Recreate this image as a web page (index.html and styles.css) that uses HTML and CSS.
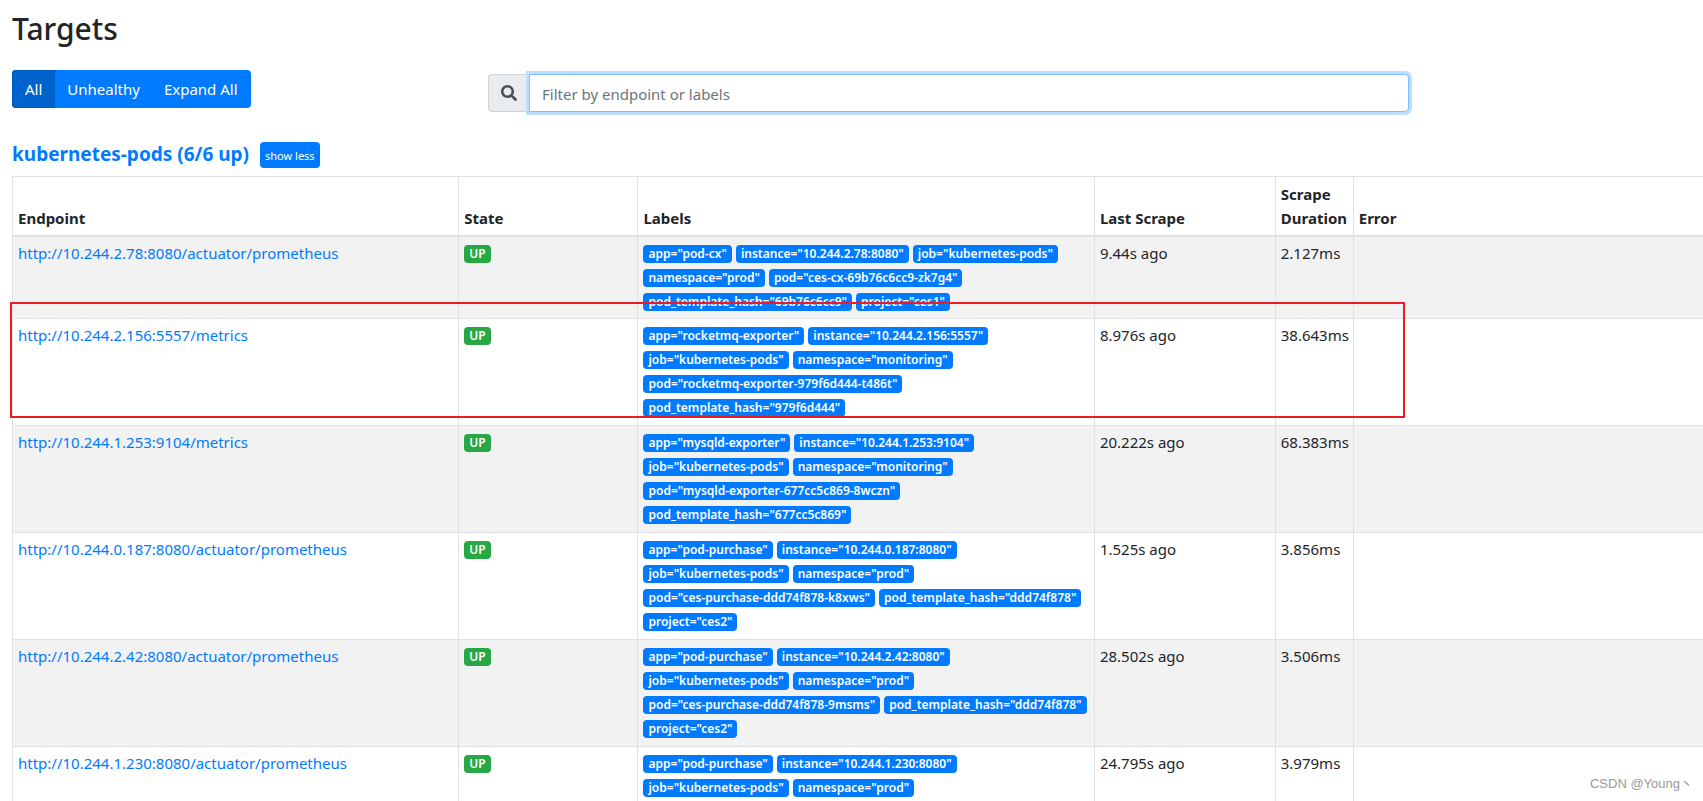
FILE: index.html
```html
<!DOCTYPE html>
<html lang="en">
<head>
<meta charset="utf-8">
<title>Targets</title>
<link rel="stylesheet" href="styles.css">
</head>
<body>
<main class="page">
  <h2 class="title">Targets</h2>
  <div class="toolbar">
    <div class="btn-group">
      <button type="button" class="btn active">All</button>
      <button type="button" class="btn">Unhealthy</button>
      <button type="button" class="btn">Expand All</button>
    </div>
    <div class="search">
      <label class="search-icon" for="filter" aria-label="Filter">
        <svg viewBox="0 0 512 512" width="16" height="16" aria-hidden="true"><path fill="currentColor" d="M505 442.700L405.300 343c-4.500-4.500-10.600-7-17-7H372c27.600-35.300 44-79.700 44-128C416 93.100 322.900 0 208 0S0 93.100 0 208s93.100 208 208 208c48.300 0 92.700-16.400 128-44v16.300c0 6.400 2.500 12.500 7 17l99.700 99.700c9.400 9.400 24.600 9.400 33.900 0l28.300-28.300c9.400-9.400 9.400-24.600.1-34zM208 336c-70.700 0-128-57.200-128-128 0-70.700 57.200-128 128-128 70.700 0 128 57.200 128 128 0 70.700-57.200 128-128 128z"/></svg>
      </label>
      <input class="search-input" id="filter" type="text" placeholder="Filter by endpoint or labels">
    </div>
  </div>
  <div class="pool">
    <h3 class="pool-title"><a href="#pool-kubernetes-pods">kubernetes-pods (6/6 up)</a></h3>
    <button type="button" class="btn-small">show less</button>
  </div>
  <table class="targets" id="pool-kubernetes-pods">
    <colgroup><col class="c-endpoint"><col class="c-state"><col class="c-labels"><col class="c-last"><col class="c-duration"><col></colgroup>
    <thead>
      <tr><th>Endpoint</th><th>State</th><th>Labels</th><th>Last Scrape</th><th>Scrape Duration</th><th>Error</th></tr>
    </thead>
    <tbody>
      <tr>
        <td><a href="#">http://10.244.2.78:8080/actuator/prometheus</a></td>
        <td><div class="badges"><span class="badge up">UP</span></div></td>
        <td><div class="badges"><span class="badge">app="pod-cx"</span><span class="badge">instance="10.244.2.78:8080"</span><span class="badge">job="kubernetes-pods"</span><span class="badge">namespace="prod"</span><span class="badge">pod="ces-cx-69b76c6cc9-zk7g4"</span><span class="badge">pod_template_hash="69b76c6cc9"</span><span class="badge">project="ces1"</span></div></td>
        <td>9.44s ago</td><td>2.127ms</td><td></td>
      </tr>
      <tr>
        <td><a href="#">http://10.244.2.156:5557/metrics</a></td>
        <td><div class="badges"><span class="badge up">UP</span></div></td>
        <td><div class="badges"><span class="badge">app="rocketmq-exporter"</span><span class="badge">instance="10.244.2.156:5557"</span><span class="badge">job="kubernetes-pods"</span><span class="badge">namespace="monitoring"</span><span class="badge">pod="rocketmq-exporter-979f6d444-t486t"</span><span class="badge">pod_template_hash="979f6d444"</span></div></td>
        <td>8.976s ago</td><td>38.643ms</td><td></td>
      </tr>
      <tr>
        <td><a href="#">http://10.244.1.253:9104/metrics</a></td>
        <td><div class="badges"><span class="badge up">UP</span></div></td>
        <td><div class="badges"><span class="badge">app="mysqld-exporter"</span><span class="badge">instance="10.244.1.253:9104"</span><span class="badge">job="kubernetes-pods"</span><span class="badge">namespace="monitoring"</span><span class="badge">pod="mysqld-exporter-677cc5c869-8wczn"</span><span class="badge">pod_template_hash="677cc5c869"</span></div></td>
        <td>20.222s ago</td><td>68.383ms</td><td></td>
      </tr>
      <tr>
        <td><a href="#">http://10.244.0.187:8080/actuator/prometheus</a></td>
        <td><div class="badges"><span class="badge up">UP</span></div></td>
        <td><div class="badges"><span class="badge">app="pod-purchase"</span><span class="badge">instance="10.244.0.187:8080"</span><span class="badge">job="kubernetes-pods"</span><span class="badge">namespace="prod"</span><span class="badge">pod="ces-purchase-ddd74f878-k8xws"</span><span class="badge">pod_template_hash="ddd74f878"</span><span class="badge">project="ces2"</span></div></td>
        <td>1.525s ago</td><td>3.856ms</td><td></td>
      </tr>
      <tr>
        <td><a href="#">http://10.244.2.42:8080/actuator/prometheus</a></td>
        <td><div class="badges"><span class="badge up">UP</span></div></td>
        <td><div class="badges"><span class="badge">app="pod-purchase"</span><span class="badge">instance="10.244.2.42:8080"</span><span class="badge">job="kubernetes-pods"</span><span class="badge">namespace="prod"</span><span class="badge">pod="ces-purchase-ddd74f878-9msms"</span><span class="badge">pod_template_hash="ddd74f878"</span><span class="badge">project="ces2"</span></div></td>
        <td>28.502s ago</td><td>3.506ms</td><td></td>
      </tr>
      <tr>
        <td><a href="#">http://10.244.1.230:8080/actuator/prometheus</a></td>
        <td><div class="badges"><span class="badge up">UP</span></div></td>
        <td><div class="badges"><span class="badge">app="pod-purchase"</span><span class="badge">instance="10.244.1.230:8080"</span><span class="badge">job="kubernetes-pods"</span><span class="badge">namespace="prod"</span></div></td>
        <td>24.795s ago</td><td>3.979ms</td><td></td>
      </tr>
    </tbody>
  </table>
  <div class="highlight"></div>
  <div class="watermark">CSDN @Young丶</div>
</main>
</body>
</html>
```
FILE: styles.css
```css
* { box-sizing: border-box; }

body {
  margin: 0;
  height: 100vh;
  overflow: hidden;
  background: #fff;
  color: #212529;
  font-family: "Noto Sans", "Open Sans", sans-serif;
  font-size: 15px;
  line-height: 24px;
}

a { color: #007bff; text-decoration: none; }
button, input { font: inherit; }

.page { position: relative; height: 100%; padding: 10px 0 0 12px; }

.title {
  margin: 0 0 22px;
  font-size: 30px;
  font-weight: 500;
  line-height: 38px;
}

.toolbar {
  display: grid;
  grid-template-columns: 476fr 921fr 294fr;
  align-items: start;
}

.btn-group { display: flex; }

.btn {
  height: 38px;
  padding: 0 12px;
  border: 0;
  background: #007bff;
  color: #fff;
}
.btn.active { background: #0062cc; box-shadow: inset 0 0 0 1px #005cbf; }
.btn:first-child { padding: 0 13px; border-radius: 4px 0 0 4px; }
.btn:last-child { padding-right: 13px; border-radius: 0 4px 4px 0; }

.search { display: flex; height: 38px; margin-top: 4px; }

.search-icon {
  display: flex;
  align-items: center;
  padding: 0 12px;
  border: 1px solid #ced4da;
  border-right: 0;
  border-radius: 4px 0 0 4px;
  background: #e9ecef;
  color: #495057;
}

.search-input {
  flex: 1;
  min-width: 0;
  padding: 2px 12px 0;
  border: 1px solid #80bdff;
  border-radius: 0 4px 4px 0;
  outline: 0;
  box-shadow: 0 0 0 3px #bfdeff;
  color: #495057;
}
.search-input::placeholder { color: #6c757d; opacity: 1; }

.pool { display: flex; align-items: center; gap: 11px; margin: 30px 0 8px; }

.pool-title { margin: 0; padding-bottom: 2px; font-size: 19px; line-height: 24px; }

.btn-small {
  height: 26px;
  padding: 2px 5px 0;
  border: 0;
  border-radius: 4px;
  background: #007bff;
  color: #fff;
  font-size: 11px;
}

.targets {
  width: 100%;
  table-layout: fixed;
  border-collapse: collapse;
  border: 1px solid #dee2e6;
  border-right: 0;
}
.c-endpoint { width: 26.4%; }
.c-state { width: 10.6%; }
.c-labels { width: 27%; }
.c-last { width: 10.7%; }
.c-duration { width: 78px; }

th, td {
  padding: 5px;
  border: 1px solid #dee2e6;
  border-right: 0;
  text-align: left;
  vertical-align: top;
}
th { border-bottom-width: 2px; vertical-align: bottom; }
td { padding: 4px 5px 6px; }
tbody tr:first-child td { padding-bottom: 5px; }
tbody tr:nth-child(odd) { background: #f2f2f2; }

.badges { display: flex; flex-wrap: wrap; gap: 6px 4px; padding: 4px 0 2px; }

.badge {
  padding: 0 5px;
  border-radius: 4px;
  background: #007bff;
  color: #fff;
  font-size: 12px;
  font-weight: 600;
  line-height: 18px;
  white-space: nowrap;
}
.badge.up { background: #28a745; }

/* Annotation frame over the second target */
.highlight {
  position: absolute;
  top: 302px;
  left: 10px;
  width: 81.9%;
  height: 116px;
  border: 2px solid #ed1c24;
}

.watermark {
  position: absolute;
  right: 10px;
  bottom: 5px;
  color: #999;
  font-family: "Liberation Sans", "Noto Sans CJK SC", sans-serif;
  font-size: 13px;
}
```
